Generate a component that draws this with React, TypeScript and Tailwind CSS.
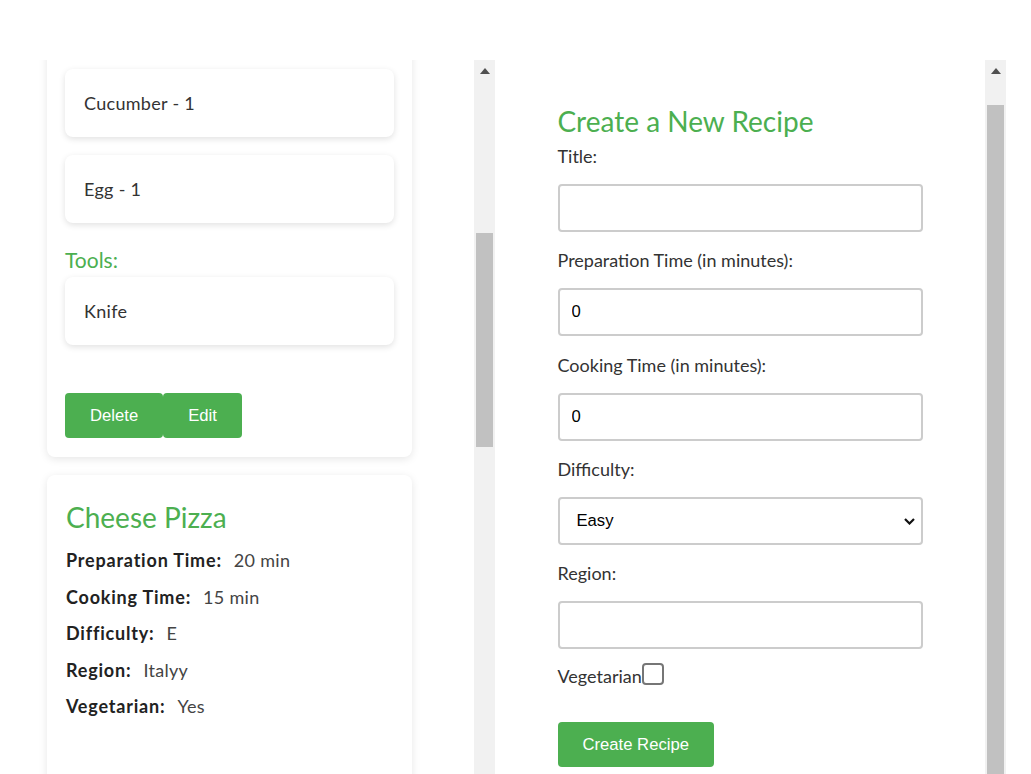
import { useState } from 'react'

const ingredients = ['Cucumber - 1', 'Egg - 1']

const pizza = [
  ['Preparation Time:', '20 min'],
  ['Cooking Time:', '15 min'],
  ['Difficulty:', 'E'],
  ['Region:', 'Italyy'],
  ['Vegetarian:', 'Yes'],
]

function Track({ thumbClass }: { thumbClass: string }) {
  return (
    <div className="w-[21px] shrink-0 bg-[#f1f1f1] flex flex-col">
      <div className="h-[21px] flex justify-center pt-[8px]">
        <svg width="10" height="6" viewBox="0 0 10 6">
          <polygon points="5,0 10,6 0,6" fill="#505050" />
        </svg>
      </div>
      <div className={'ml-[2px] w-[17px] bg-[#c1c1c1] ' + thumbClass} />
    </div>
  )
}

function ItemCard({ text }: { text: string }) {
  return (
    <div className="h-[68px] flex items-center px-[19px] rounded-[8px] bg-white shadow-[0_2px_6px_rgba(0,0,0,0.12)] tracking-[0.3px]">
      {text}
    </div>
  )
}

function Field({ label, children }: { label: string; children: React.ReactNode }) {
  return (
    <div className="flex flex-col mb-[16.25px]">
      <label className="leading-[24px] mb-[16px]">{label}</label>
      {children}
    </div>
  )
}

const inputCls =
  "h-[48px] w-full border-2 border-[#ccc] rounded-[4px] px-[12px] text-[16.67px] text-black font-['Liberation_Sans',Arial,sans-serif] outline-none bg-white"

export default function App() {
  const [title, setTitle] = useState('')
  const [prep, setPrep] = useState('0')
  const [cook, setCook] = useState('0')
  const [difficulty, setDifficulty] = useState('Easy')
  const [region, setRegion] = useState('')
  const [veg, setVeg] = useState(false)

  return (
    <div className="h-[774px] overflow-hidden bg-white pt-[60px] flex font-['Lato','Open_Sans',sans-serif] text-[18px] text-[#333]">
      {/* recipe list */}
      <div className="w-[495px] h-[714px] flex shrink-0">
        <div className="flex-1 overflow-hidden pl-[47px]">
          <div className="w-[365px] -mt-[20px] rounded-[8px] bg-white shadow-[0_2px_8px_rgba(0,0,0,0.1)] px-[18px] pt-[29px] pb-[19px]">
            <div className="flex flex-col gap-[18px]">
              {ingredients.map((i) => (
                <ItemCard key={i} text={i} />
              ))}
            </div>
            <h3 className="text-[21px] leading-[28px] text-[#4caf50] mt-[23px] mb-[3px]">Tools:</h3>
            <ItemCard text="Knife" />
            <div className="flex mt-[48px] font-['Liberation_Sans',Arial,sans-serif] text-[16.67px] text-white">
              <button className="h-[45px] px-[25px] rounded-[4px] bg-[#4caf50]">Delete</button>
              <button className="h-[45px] px-[25px] rounded-[4px] bg-[#4caf50]">Edit</button>
            </div>
          </div>

          <div className="w-[365px] mt-[18px] h-[400px] rounded-[8px] bg-white shadow-[0_2px_8px_rgba(0,0,0,0.1)] px-[19px] pt-[24px]">
            <h2 className="text-[28px] leading-[36px] text-[#4caf50]">Cheese Pizza</h2>
            <div className="mt-[13px] flex flex-col gap-[12.5px]">
              {pizza.map(([k, v]) => (
                <p key={k} className="leading-[24px]">
                  <strong className="font-bold text-[#222] tracking-[0.8px] mr-[12px]">{k}</strong>
                  <span className="text-[#444] tracking-[0.3px]">{v}</span>
                </p>
              ))}
            </div>
          </div>
        </div>
        <Track thumbClass="mt-[152px] h-[214px]" />
      </div>

      {/* create form */}
      <div className="w-[511px] h-[714px] flex shrink-0">
        <div className="flex-1 overflow-hidden flex justify-center pt-[43px]">
          <form className="w-[365px] flex flex-col" onSubmit={(e) => e.preventDefault()}>
            <h2 className="text-[28px] leading-[36px] text-[#4caf50] mb-[5px]">Create a New Recipe</h2>
            <Field label="Title:">
              <input className={inputCls} value={title} onChange={(e) => setTitle(e.target.value)} />
            </Field>
            <Field label="Preparation Time (in minutes):">
              <input className={inputCls} value={prep} onChange={(e) => setPrep(e.target.value)} />
            </Field>
            <Field label="Cooking Time (in minutes):">
              <input className={inputCls} value={cook} onChange={(e) => setCook(e.target.value)} />
            </Field>
            <Field label="Difficulty:">
              <div className="relative">
                <select
                  className={inputCls + ' appearance-none pl-[17px]'}
                  value={difficulty}
                  onChange={(e) => setDifficulty(e.target.value)}
                >
                  <option>Easy</option>
                  <option>Medium</option>
                  <option>Hard</option>
                </select>
                <svg
                  className="absolute right-[8px] top-[21px] pointer-events-none"
                  width="11"
                  height="7"
                  viewBox="0 0 11 7"
                >
                  <path d="M1 1l4.5 4.5L10 1" stroke="#111" strokeWidth="2.2" fill="none" />
                </svg>
              </div>
            </Field>
            <div className="flex flex-col">
              <label className="leading-[24px] mb-[16px]">Region:</label>
              <input className={inputCls} value={region} onChange={(e) => setRegion(e.target.value)} />
            </div>
            <label className="flex items-end mt-[14px]">
              <span className="leading-[24px]">Vegetarian</span>
              <input
                type="checkbox"
                checked={veg}
                onChange={(e) => setVeg(e.target.checked)}
                className="appearance-none w-[22px] h-[22px] mb-[3px] border-2 border-[#767676] rounded-[4px] bg-white checked:bg-[#4caf50]"
              />
            </label>
            <div className="mt-[34px]">
              <button className="h-[45px] px-[25px] rounded-[4px] bg-[#4caf50] text-white text-[16.67px] font-['Liberation_Sans',Arial,sans-serif]">
                Create Recipe
              </button>
            </div>
          </form>
        </div>
        <Track thumbClass="mt-[24px] flex-1" />
      </div>
    </div>
  )
}
